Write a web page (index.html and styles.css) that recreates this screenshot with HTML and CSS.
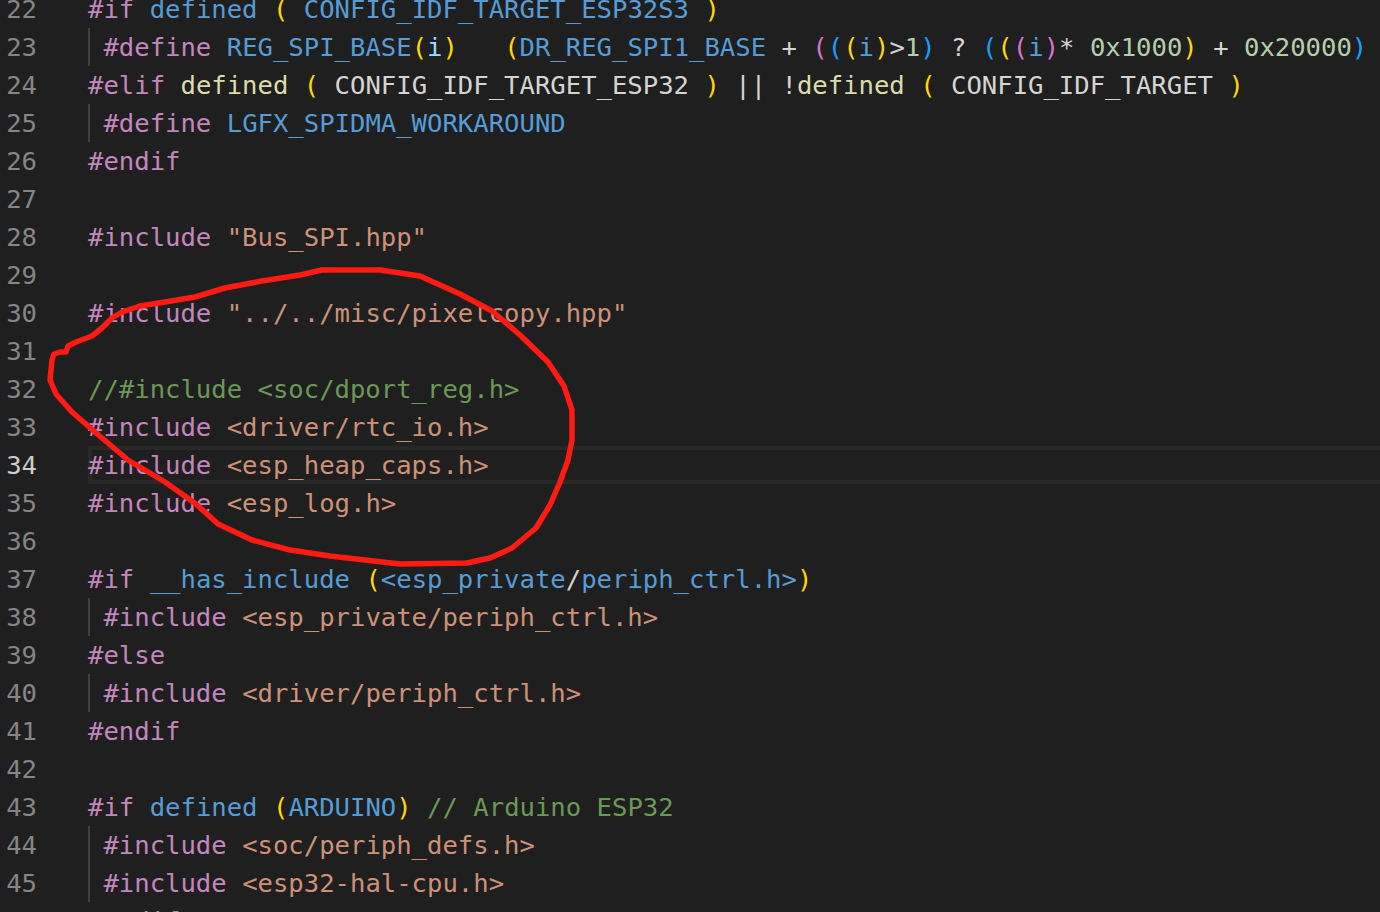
FILE: index.html
```html
<!DOCTYPE html>
<html lang="en">
<head>
    <meta charset="UTF-8">
    <meta name="viewport" content="width=device-width, initial-scale=1.0">
    <title>Bus_SPI.cpp</title>
    <link rel="stylesheet" href="styles.css">
</head>
<body>
    <div class="editor">
        <div class="lines">
            <div class="line"><span class="ln">22</span><span class="code"><span class="kw">#if</span> <span class="bl">defined</span> <span class="b1">(</span> <span class="bl">CONFIG_IDF_TARGET_ESP32S3</span> <span class="b1">)</span></span></div>
            <div class="line"><span class="ln">23</span><span class="code guide"> <span class="kw">#define</span> <span class="bl">REG_SPI_BASE</span><span class="b1">(</span><span class="va">i</span><span class="b1">)</span>   <span class="b1">(</span><span class="bl">DR_REG_SPI1_BASE</span> + <span class="b2">(</span><span class="b3">(</span><span class="b1">(</span><span class="bl">i</span><span class="b1">)</span>&gt;<span class="nu">1</span><span class="b3">)</span> ? <span class="b3">(</span><span class="b1">(</span><span class="b2">(</span><span class="bl">i</span><span class="b2">)</span>* <span class="nu">0x1000</span><span class="b1">)</span> + <span class="nu">0x20000</span><span class="b3">)</span> : <span class="nu">0</span><span class="b2">)</span><span class="b1">)</span></span></div>
            <div class="line"><span class="ln">24</span><span class="code"><span class="kw">#elif</span> <span class="fn">defined</span> <span class="b1">(</span> CONFIG_IDF_TARGET_ESP32 <span class="b1">)</span> || !<span class="fn">defined</span> <span class="b1">(</span> CONFIG_IDF_TARGET <span class="b1">)</span></span></div>
            <div class="line"><span class="ln">25</span><span class="code guide"> <span class="kw">#define</span> <span class="bl">LGFX_SPIDMA_WORKAROUND</span></span></div>
            <div class="line"><span class="ln">26</span><span class="code"><span class="kw">#endif</span></span></div>
            <div class="line"><span class="ln">27</span><span class="code"></span></div>
            <div class="line"><span class="ln">28</span><span class="code"><span class="kw">#include</span> <span class="st">"Bus_SPI.hpp"</span></span></div>
            <div class="line"><span class="ln">29</span><span class="code"></span></div>
            <div class="line"><span class="ln">30</span><span class="code"><span class="kw">#include</span> <span class="st">"../../misc/pixelcopy.hpp"</span></span></div>
            <div class="line"><span class="ln">31</span><span class="code"></span></div>
            <div class="line"><span class="ln">32</span><span class="code"><span class="cm">//#include &lt;soc/dport_reg.h&gt;</span></span></div>
            <div class="line"><span class="ln">33</span><span class="code"><span class="kw">#include</span> <span class="st">&lt;driver/rtc_io.h&gt;</span></span></div>
            <div class="line current"><span class="ln">34</span><span class="code"><span class="kw">#include</span> <span class="st">&lt;esp_heap_caps.h&gt;</span></span></div>
            <div class="line"><span class="ln">35</span><span class="code"><span class="kw">#include</span> <span class="st">&lt;esp_log.h&gt;</span></span></div>
            <div class="line"><span class="ln">36</span><span class="code"></span></div>
            <div class="line"><span class="ln">37</span><span class="code"><span class="kw">#if</span> <span class="bl">__has_include</span> <span class="b1">(</span><span class="bl">&lt;esp_private</span>/<span class="bl">periph_ctrl.h&gt;</span><span class="b1">)</span></span></div>
            <div class="line"><span class="ln">38</span><span class="code guide"> <span class="kw">#include</span> <span class="st">&lt;esp_private/periph_ctrl.h&gt;</span></span></div>
            <div class="line"><span class="ln">39</span><span class="code"><span class="kw">#else</span></span></div>
            <div class="line"><span class="ln">40</span><span class="code guide"> <span class="kw">#include</span> <span class="st">&lt;driver/periph_ctrl.h&gt;</span></span></div>
            <div class="line"><span class="ln">41</span><span class="code"><span class="kw">#endif</span></span></div>
            <div class="line"><span class="ln">42</span><span class="code"></span></div>
            <div class="line"><span class="ln">43</span><span class="code"><span class="kw">#if</span> <span class="bl">defined</span> <span class="b1">(</span><span class="bl">ARDUINO</span><span class="b1">)</span> <span class="cm">// Arduino ESP32</span></span></div>
            <div class="line"><span class="ln">44</span><span class="code guide"> <span class="kw">#include</span> <span class="st">&lt;soc/periph_defs.h&gt;</span></span></div>
            <div class="line"><span class="ln">45</span><span class="code guide"> <span class="kw">#include</span> <span class="st">&lt;esp32-hal-cpu.h&gt;</span></span></div>
            <div class="line"><span class="ln">46</span><span class="code"><span class="kw">#endif</span></span></div>
        </div>

        <!-- red marker scribble drawn over the code -->
        <svg class="scribble" width="1380" height="912" viewBox="0 0 1380 912">
            <path d="M50 380 L52 360 L54 354 L60 352 L66 352 L68 346 L76 342 L92 336 L102 328 L112 318 L122 312 L140 306 L165 302 L195 297 L225 288 L262 281 L300 275 L322 270 L380 270 L420 276 L460 294 L492 311 L520 335 L548 362 L564 386 L572 410 L572 440 L568 460 L560 482 L550 505 L536 528 L512 548 L490 558 L467 563 L400 564 L330 556 L290 550 L252 540 L218 524 L196 504 L165 482 L128 460 L95 432 L72 412 L56 394 L50 380"/>
        </svg>
    </div>
</body>
</html>
```

FILE: styles.css
```css
*{margin:0; padding:0; box-sizing:border-box;}
html,body{height:100%;}

body{
    background-color:#1f1f1f;
    overflow:hidden;
}
.editor{
    position:relative;
    width:1380px; height:912px;
    overflow:hidden;
    font-family:"DejaVu Sans Mono", monospace;
    font-size:25.6px;
    color:#d4d4d4;
}
/* editor is scrolled a bit, line 22 is cut at the top */
.lines{
    margin-top:-10px;
}
.line{
    display:flex;
    height:38px; line-height:38px;
    white-space:pre;
}
.ln{
    width:37px;
    flex-shrink:0;
    text-align:right;
    color:#858585;
}
.code{
    flex:1;
    margin-left:51px;
    margin-right:-20px;
}
/* indent guide */
.guide{
    background-image:linear-gradient(#404040,#404040);
    background-repeat:no-repeat;
    background-size:2px 100%;
}
.current .ln{color:#cccccc;}
.current .code{
    box-shadow:inset 0 0 0 4px #282828;
}

.kw{color:#c586c0;}
.bl{color:#569cd6;}
.fn{color:#dcdcaa;}
.va{color:#9cdcfe;}
.st{color:#ce9178;}
.cm{color:#6a9955;}
.nu{color:#b5cea8;}
.b1{color:#ffd700;}
.b2{color:#da70d6;}
.b3{color:#179fff;}

.scribble{
    position:absolute; left:0; top:0;
    pointer-events:none;
}
.scribble path{
    fill:none;
    stroke:#ff1a12;
    stroke-width:5.5;
    stroke-linejoin:round;
    stroke-linecap:round;
}
```
